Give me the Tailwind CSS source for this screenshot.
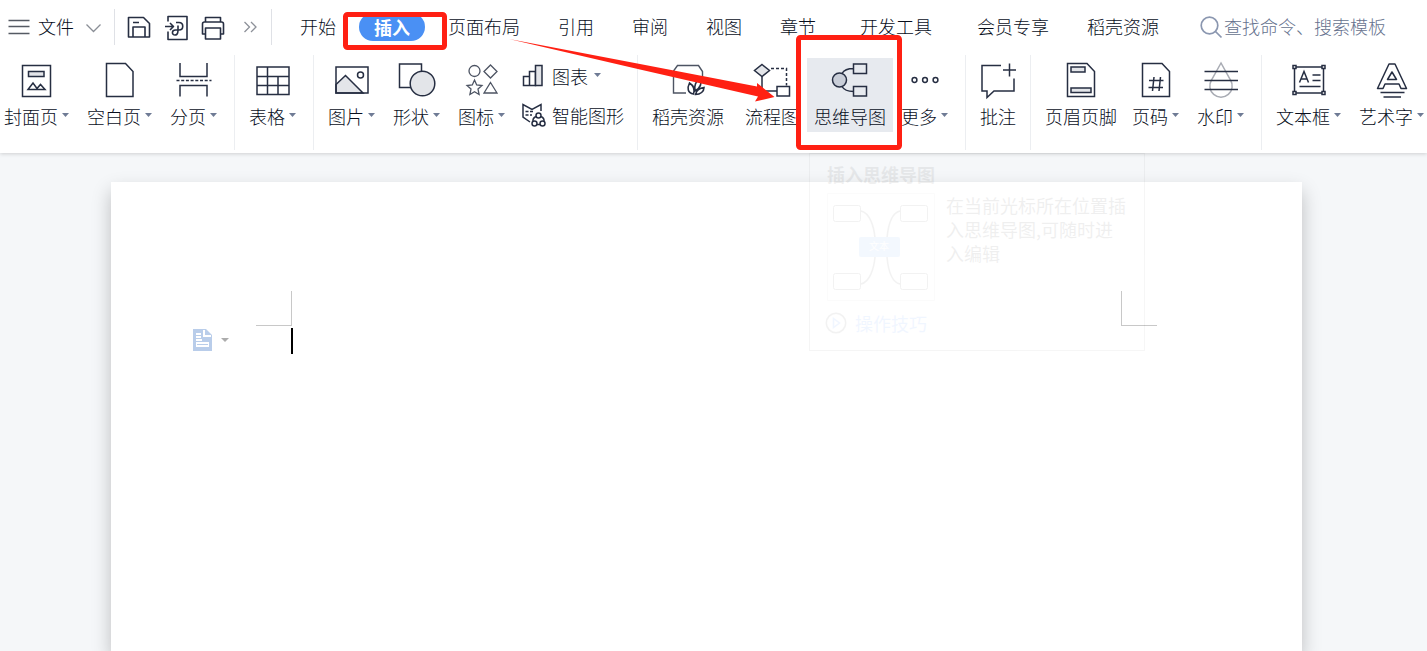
<!DOCTYPE html>
<html lang="zh-CN">
<head>
<meta charset="utf-8">
<meta name="viewport" content="width=device-width, initial-scale=1">
<title>WPS 文字 - 插入</title>
<script src="https://cdn.jsdelivr.net/npm/@tailwindcss/browser@4"></script>
</head>
<body class="relative flex min-h-screen flex-col overflow-x-hidden bg-[#f5f7f9] font-['Noto_Sans_CJK_SC',sans-serif] text-[18px] font-light whitespace-nowrap text-[#080e1c]">

<header class="relative z-10 bg-white shadow-[0_1px_4px_rgba(0,0,0,0.16)]">
  <!-- Menu bar -->
  <div class="flex h-[55px] items-center pb-0.5">
    <button class="flex items-center pl-2" type="button">
      <svg class="h-6 w-6" viewBox="0 0 24 24" fill="none" stroke="#555a63" stroke-width="1.5"><path d="M.5 5.500h21M.5 11.500h21M.5 18.500h21"/></svg>
      <span class="ml-1.5">文件</span>
      <svg class="ml-3 h-4 w-4" viewBox="0 0 16 16" fill="none" stroke="#8a8e96" stroke-width="1.300"><path d="M.5 5.500 7.500 12.500 14.500 5.500"/></svg>
    </button>
    <span class="ml-3 h-9 w-px bg-[#dfe1e6]"></span>
    <div class="flex items-center gap-[7px] pl-2">
      <button type="button" aria-label="保存" class="p-0.5"><svg class="h-7 w-7" viewBox="0 0 28 28" fill="none" stroke="#262e42" stroke-width="1.600" stroke-linejoin="round"><path d="M3.500 4.500h15l6 6V24h-21zM8 24V14h12v10M8 9.500h6"/></svg></button>
      <button type="button" aria-label="输出为PDF" class="-ml-0.5 p-0.5"><svg class="h-7 w-7" viewBox="0 0 28 28" fill="none" stroke="#262e42" stroke-width="1.600" stroke-linejoin="round"><path d="M6 8.500V3.500h19v23H6v-8M3 13.500h8M8 10l3.500 3.500L8 17M14 9.500h3c5 0 5 7.500 0 7.500h-3.500c-4 0-4 5-.5 5 3.500 0 3-5 3-7.500v-2"/></svg></button>
      <button type="button" aria-label="打印"><svg class="h-7 w-7" viewBox="0 0 28 28" fill="none" stroke="#262e42" stroke-width="1.600" stroke-linejoin="round"><path d="M6.500 9V4.500h15V9M6.500 21H3.500V11q0-2 2-2h17q2 0 2 2v10h-3M6.500 15h15v11h-15z"/></svg></button>
      <button type="button" aria-label="更多快捷命令" class="pl-1.5"><svg class="h-6 w-6" viewBox="0 0 24 24" fill="none" stroke="#8d9199" stroke-width="1.300"><path d="M4.500 7l5 5-5 5M11 7l5 5-5 5"/></svg></button>
    </div>
    <span class="ml-[7px] h-9 w-px bg-[#dfe1e6]"></span>
    <nav class="flex items-center pl-[9px]">
      <button type="button" class="px-[19px]">开始</button>
      <button type="button" class="mx-1 rounded-full bg-[#4a90f4] px-[15px] leading-7 font-bold text-white">插入</button>
      <button type="button" class="px-[19px]">页面布局</button>
      <button type="button" class="px-[19px]">引用</button>
      <button type="button" class="px-[19px]">审阅</button>
      <button type="button" class="px-[19px]">视图</button>
      <button type="button" class="px-[19px]">章节</button>
      <button type="button" class="ml-1.5 px-[19px]">开发工具</button>
      <button type="button" class="ml-[7px] px-[19px]">会员专享</button>
      <button type="button" class="px-[19px]">稻壳资源</button>
    </nav>
    <label class="ml-[22px] flex items-center text-[#66728e]">
      <svg class="h-6 w-6" viewBox="0 0 24 24" fill="none" stroke="#8b97b0" stroke-width="1.700" aria-hidden="true"><circle cx="9.500" cy="10.500" r="8.300"/><path d="M15.500 16.500l6 6"/></svg>
      <input type="text" aria-label="查找命令" placeholder="查找命令、搜索模板" class="w-44 bg-transparent outline-none placeholder:text-[#66728e]">
    </label>
  </div>

  <!-- Ribbon -->
  <div class="flex h-[98px] items-start gap-px leading-[26px]">
    <button type="button" class="mt-[3px] flex flex-col items-start gap-[3px] pt-0.5 pr-2.5 pb-[3px] pl-1">
      <svg class="h-10 w-10 self-center" viewBox="0 0 40 40" fill="none" stroke="#262e42" stroke-width="1.500"><path d="M5.500 5.500h28v31h-28z"/><path fill="#e3e5e9" d="M11.500 11.500H27v5H11.500z"/><path d="M11 29.500l5-6.500 4 5.500 3.500-4 4.500 5z"/></svg>
      <span class="flex items-center gap-1">封面页<svg class="mb-0.5 h-1 w-[7px]" viewBox="0 0 7 4" fill="#6f7b95"><path d="M0 0h7L3.500 4z"/></svg></span>
    </button>
    <button type="button" class="mt-[3px] flex flex-col items-start gap-[3px] pt-0.5 pr-2.5 pb-[3px] pl-[7px]">
      <svg class="h-10 w-10 self-center" viewBox="0 0 40 40" fill="none" stroke="#262e42" stroke-width="1.500"><path d="M6.500 3.500h19l7.500 8V36.500H6.500z"/></svg>
      <span class="flex items-center gap-1">空白页<svg class="mb-0.5 h-1 w-[7px]" viewBox="0 0 7 4" fill="#6f7b95"><path d="M0 0h7L3.500 4z"/></svg></span>
    </button>
    <button type="button" class="mt-[3px] flex flex-col items-start gap-[3px] pt-0.5 pr-2.5 pb-[3px] pl-[7px]">
      <svg class="h-10 w-10 self-center" viewBox="0 0 40 40" fill="none" stroke="#262e42" stroke-width="1.500"><path d="M6 3v13.500h27V3M6 36.500v-11h27v11"/><path stroke-dasharray="3 1.700" d="M2.500 20.500h35"/></svg>
      <span class="flex items-center gap-1">分页<svg class="mb-0.5 h-1 w-[7px]" viewBox="0 0 7 4" fill="#6f7b95"><path d="M0 0h7L3.500 4z"/></svg></span>
    </button>
    <span class="mx-1.5 h-[95px] w-px bg-[#eceef1]"></span>
    <button type="button" class="mt-[3px] flex flex-col items-start gap-[3px] pt-0.5 pr-2.5 pb-[3px] pl-[7px]">
      <svg class="h-10 w-10 self-center" viewBox="0 0 40 40" fill="none" stroke="#262e42" stroke-width="1.500"><path d="M4 7h32v27.500H4zM4 16.500h32M4 25.500h32M14.500 7v27.500M25 16.500v18"/></svg>
      <span class="flex items-center gap-1">表格<svg class="mb-0.5 h-1 w-[7px]" viewBox="0 0 7 4" fill="#6f7b95"><path d="M0 0h7L3.500 4z"/></svg></span>
    </button>
    <span class="mx-1.5 h-[95px] w-px bg-[#eceef1]"></span>
    <button type="button" class="mt-[3px] flex flex-col items-start gap-[3px] pt-0.5 pr-2.5 pb-[3px] pl-[7px]">
      <svg class="h-10 w-10 self-center" viewBox="0 0 40 40" fill="none" stroke="#262e42" stroke-width="1.500"><path fill="#e3e5e9" d="M4 24.500l9.500-9L31 33H4z"/><path d="M4 7h32v26H4z"/><circle cx="28.500" cy="15" r="3"/></svg>
      <span class="flex items-center gap-1">图片<svg class="mb-0.5 h-1 w-[7px]" viewBox="0 0 7 4" fill="#6f7b95"><path d="M0 0h7L3.500 4z"/></svg></span>
    </button>
    <button type="button" class="mt-[3px] flex flex-col items-start gap-[3px] pt-0.5 pr-2.5 pb-[3px] pl-[7px]">
      <svg class="h-10 w-10 self-center" viewBox="0 0 40 40" fill="none" stroke="#262e42" stroke-width="1.500"><path d="M2.500 4h22v23.500h-22z"/><circle cx="25.500" cy="23.500" r="12.300" fill="#e3e5e9"/></svg>
      <span class="flex items-center gap-1">形状<svg class="mb-0.5 h-1 w-[7px]" viewBox="0 0 7 4" fill="#6f7b95"><path d="M0 0h7L3.500 4z"/></svg></span>
    </button>
    <button type="button" class="mt-[3px] flex flex-col items-start gap-[3px] pt-0.5 pr-2.5 pb-[3px] pl-[7px]">
      <svg class="h-10 w-10 self-center" viewBox="0 0 40 40" fill="none" stroke="#4d5463" stroke-width="1.300"><circle cx="12.500" cy="11" r="5.500"/><path d="M28.500 5l6.500 6.500-6.500 6.500-6.500-6.500zM28.500 22.500L35 33H22zM12.500 20l2.200 4.900 5.300.6-4 3.600 1.100 5.400-4.600-2.700-4.600 2.700L9 29.100l-4-3.600 5.300-.6z"/></svg>
      <span class="flex items-center gap-1">图标<svg class="mb-0.5 h-1 w-[7px]" viewBox="0 0 7 4" fill="#6f7b95"><path d="M0 0h7L3.500 4z"/></svg></span>
    </button>
    <div class="mt-2 flex flex-col items-start gap-[13px]">
      <button type="button" class="flex items-center gap-1.5 px-1.5">
        <svg class="h-6 w-6" viewBox="0 0 24 24" fill="none" stroke="#262e42" stroke-width="1.500"><path d="M1.500 12.500h6v9h-6zM7.500 7.500h6v14h-6z"/><path fill="#e3e5e9" d="M13.500 1.500h6.500v20h-6.500z"/></svg>
        <span class="flex items-center gap-1.5">图表<svg class="mb-0.5 h-1 w-[7px]" viewBox="0 0 7 4" fill="#6f7b95"><path d="M0 0h7L3.500 4z"/></svg></span>
      </button>
      <button type="button" class="flex items-center gap-1.5 px-1.5">
        <svg class="h-6 w-6" viewBox="0 0 24 24" fill="none" stroke="#262e42" stroke-width="1.500"><path d="M19 8V1.500L10 6.500 1 1.500V14l7 5M3.500 8.500h3M8 8.500h3M3.500 12h3M8 12h2"/><circle cx="16.500" cy="12.500" r="2.500"/><circle cx="12.500" cy="20.500" r="2.500"/><circle cx="20.500" cy="20.500" r="2.500"/><path d="M14 13.500q-3.500 1.500-3 5M19 13.500q3.500 1.500 3 5M15 21.500h3"/></svg>
        <span>智能图形</span>
      </button>
    </div>
    <span class="mx-1.5 h-[95px] w-px bg-[#eceef1]"></span>
    <button type="button" class="mt-[3px] flex flex-col items-start gap-[3px] px-[7px] pt-0.5 pb-[3px]">
      <svg class="h-10 w-10 self-center" viewBox="0 0 40 40" fill="none" stroke="#4d5463" stroke-width="1.400"><path d="M18 33H5.500V11l4-5.500h21l4 6v8"/><g stroke="#262e42" stroke-width="1.600"><path d="M25.500 34c-6-1-6.500-6-4-11 4 2.500 5.500 6 4 11zM27 31c-1-6 1-10 5-12 2 5 .5 9-5 12zM27.500 34.500c1-4 3.500-6.500 8.500-7 0 4-3.500 7-8.500 7z"/></g></svg>
      <span>稻壳资源</span>
    </button>
    <button type="button" class="mt-[3px] ml-1.5 flex flex-col items-start gap-[3px] px-[7px] pt-0.5 pb-[3px]">
      <svg class="h-10 w-10 self-center" viewBox="0 0 40 40" fill="none" stroke="#262e42" stroke-width="1.500"><path fill="#e3e5e9" d="M10 4.500l7.500 6-7.500 6-7.500-6z"/><path d="M10 16.500V31h15M25 26.500h12.500V36H25z"/><path stroke-dasharray="3 2" d="M19 8.500h15.500v17"/></svg>
      <span>流程图</span>
    </button>
    <button type="button" class="mt-[3px] flex flex-col items-start gap-[3px] bg-[#e7eaef] px-[7px] pt-0.5 pb-[3px]">
      <svg class="h-10 w-10 self-center" viewBox="0 0 40 40" fill="none" stroke="#262e42" stroke-width="1.500"><circle cx="9.500" cy="20" r="7" fill="#c9ced8"/><path d="M23.500 4h13v9.500h-13zM23.500 26.500h13V36h-13zM12 13.500c2-3.500 6-5 11.500-5M12 26.500c2 3.500 6 5 11.500 5"/></svg>
      <span>思维导图</span>
    </button>
    <button type="button" class="mt-[3px] flex flex-col items-start gap-[3px] pt-0.5 pr-2.5 pb-[3px] pl-[7px]">
      <svg class="h-10 w-10 self-center" viewBox="0 0 40 40" fill="none" stroke="#262e42" stroke-width="1.500"><circle cx="9.500" cy="20" r="2.400"/><circle cx="20" cy="20" r="2.400"/><circle cx="30.500" cy="20" r="2.400"/></svg>
      <span class="flex items-center gap-1">更多<svg class="mb-0.5 h-1 w-[7px]" viewBox="0 0 7 4" fill="#6f7b95"><path d="M0 0h7L3.500 4z"/></svg></span>
    </button>
    <span class="mx-1.5 h-[95px] w-px bg-[#eceef1]"></span>
    <button type="button" class="mt-[3px] flex flex-col items-start gap-[3px] px-[7px] pt-0.5 pb-[3px]">
      <svg class="-mx-0.5 h-10 w-10 self-center" viewBox="0 0 40 40" fill="none" stroke="#262e42" stroke-width="1.500"><path d="M23 5.500H4V31h5v6.500L16 31h20V18.500M31.500 3.500v13M25 10h13"/></svg>
      <span>批注</span>
    </button>
    <span class="mx-1.5 h-[95px] w-px bg-[#eceef1]"></span>
    <button type="button" class="mt-[3px] flex flex-col items-start gap-[3px] px-[7px] pt-0.5 pb-[3px]">
      <svg class="h-10 w-10 self-center" viewBox="0 0 40 40" fill="none" stroke="#262e42" stroke-width="1.500"><path d="M6.500 3.500H26l7.500 8V36.500h-27z"/><path fill="#e3e5e9" d="M10 7h14v5H10zM10 28h20v4.500H10z"/></svg>
      <span>页眉页脚</span>
    </button>
    <button type="button" class="mt-[3px] flex flex-col items-start gap-[3px] pt-0.5 pr-2.5 pb-[3px] pl-[7px]">
      <svg class="h-10 w-10 self-center" viewBox="0 0 40 40" fill="none" stroke="#262e42" stroke-width="1.500"><path d="M6.500 3.500h19.500l7.500 8V36.500h-27zM13 20.500h14.500M12.500 27.500H27M18 17l-1.500 14M24.500 17L23 31"/></svg>
      <span class="flex items-center gap-1">页码<svg class="mb-0.5 h-1 w-[7px]" viewBox="0 0 7 4" fill="#6f7b95"><path d="M0 0h7L3.500 4z"/></svg></span>
    </button>
    <button type="button" class="mt-[3px] flex flex-col items-start gap-[3px] pt-0.5 pr-2.5 pb-[3px] pl-[7px]">
      <svg class="h-10 w-10 self-center" viewBox="0 0 40 40" fill="none" stroke="#262e42" stroke-width="1.500"><path stroke="#a9acb4" d="M20 3l-9.500 17a11.200 11.200 0 1 0 19 0z"/><path d="M3.500 11.500H37M3.500 20.500H37M3.500 29.500H37"/></svg>
      <span class="flex items-center gap-1">水印<svg class="mb-0.5 h-1 w-[7px]" viewBox="0 0 7 4" fill="#6f7b95"><path d="M0 0h7L3.500 4z"/></svg></span>
    </button>
    <span class="mx-1.5 h-[95px] w-px bg-[#eceef1]"></span>
    <button type="button" class="mt-[3px] flex flex-col items-start gap-[3px] pt-0.5 pr-2.5 pb-[3px] pl-[7px]">
      <svg class="h-10 w-10 self-center" viewBox="0 0 40 40" fill="none" stroke="#262e42" stroke-width="1.500"><path d="M5.500 7h29v26h-29zM10.500 22.500L15 11.500l4.500 11M12 19h6M23.500 15h8M23.500 20.500h8M10.500 26.500h21"/><path fill="#fff" d="M4 5.500h3v3H4zM33 5.500h3v3h-3zM4 31.500h3v3H4zM33 31.500h3v3h-3z"/></svg>
      <span class="flex items-center gap-1">文本框<svg class="mb-0.5 h-1 w-[7px]" viewBox="0 0 7 4" fill="#6f7b95"><path d="M0 0h7L3.500 4z"/></svg></span>
    </button>
    <button type="button" class="mt-[3px] flex flex-col items-start gap-[3px] pt-0.5 pr-0.5 pb-[3px] pl-[7px]">
      <svg class="h-10 w-10 self-center" viewBox="0 0 40 40" fill="none" stroke="#262e42" stroke-width="1.500" stroke-linejoin="round"><path d="M17 4h6l11.500 24.500H29L27 24H13l-2 4.500H5.500zM20 12l-4.500 7.500h9zM8.500 32.500h24M11.500 37H29"/></svg>
      <span class="flex items-center gap-1">艺术字<svg class="mb-0.5 h-1 w-[7px]" viewBox="0 0 7 4" fill="#6f7b95"><path d="M0 0h7L3.500 4z"/></svg></span>
    </button>
  </div>
</header>

<!-- Document area -->
<main class="relative flex grow flex-col overflow-hidden pt-[29px] pr-[125px] pl-[111px]">
  <div class="grow bg-white pt-[109px] shadow-[0_9px_18px_rgba(0,0,0,0.23)]">
    <div class="flex justify-between px-[145px]">
      <span class="h-[35px] w-9 border-r border-b border-[#c8c8c8]"></span>
      <span class="h-[35px] w-9 border-b border-l border-[#c8c8c8]"></span>
    </div>
    <div class="flex items-center pt-0.5 pl-[82px]">
      <button type="button" aria-label="段落布局" class="flex items-center gap-2">
        <svg class="h-6 w-5" viewBox="0 0 20 24"><path fill="#b9cdea" d="M0 0h13l6 6v16H0z"/><path fill="#fff" d="M10 1h2v5h6v2h-8zM3 4h5v2H3zM3 7h5v2H3zM3 10h6v2H3zM3 13h13v5H3z"/><path stroke="#b9cdea" d="M4 15.500h11"/></svg>
        <svg class="mb-0.5 h-1 w-2" viewBox="0 0 8 4" fill="#acacac"><path d="M0 0h8L4 4z"/></svg>
      </button>
      <span class="ml-[62px] h-[26px] w-0.5 bg-black"></span>
    </div>
  </div>

  <!-- Fading tooltip of the mind-map command -->
  <div role="tooltip" class="absolute top-0 left-[809px] h-[198px] w-[336px] border border-black/60 px-[17px] pt-1.5 font-normal text-black opacity-[0.06]">
    <p class="leading-7 font-bold">插入思维导图</p>
    <div class="mt-[5px] flex gap-[11px]">
      <svg class="h-[108px] w-[108px] shrink-0" viewBox="0 0 108 108" fill="none" stroke="#333"><path stroke="#aaa" stroke-width=".6" d="M.5.5h107v107H.5z"/><rect x="6.500" y="12.500" width="27" height="16" rx="2"/><rect x="73.500" y="12.500" width="27" height="16" rx="2"/><rect x="6.500" y="80.500" width="27" height="16" rx="2"/><rect x="73.500" y="80.500" width="27" height="16" rx="2"/><path stroke-width="1.500" d="M34 18c9 2 13 16 14 27M73 18c-9 2-12 16-13 27M34 91c9-2 13-16 14-27M73 91c-9-2-12-16-13-27"/><rect x="32" y="44" width="41" height="20" rx="2" fill="#4a90f4" stroke="none"/><text x="52" y="57" text-anchor="middle" font-size="10" fill="#fff" stroke="none">文本</text></svg>
      <p class="w-[183px] leading-6 whitespace-normal">在当前光标所在位置插入思维导图,可随时进入编辑</p>
    </div>
    <a href="#" class="-ml-0.5 mt-[9px] flex items-center gap-2 leading-[26px] text-[#1a73ff]">
      <svg class="h-[22px] w-[22px]" viewBox="0 0 22 22" fill="none" stroke="currentColor" stroke-width="1.500"><circle cx="11" cy="11" r="9.700" stroke="#333"/><path d="M8.500 6.500v9l6-4.500z"/></svg>操作技巧</a>
  </div>
</main>

<!-- Tutorial markers pointing from the tab to the command -->
<svg class="pointer-events-none absolute inset-0 z-20 h-full w-full" fill="none" stroke="#ff2013" stroke-width="5" stroke-linejoin="round" aria-hidden="true">
  <rect x="345.500" y="14.500" width="99" height="33" rx="2"/>
  <rect x="798.500" y="37.500" width="101" height="110" rx="2"/>
  <path fill="#ff2013" stroke="none" d="M509 39L640 64l117 22.500V83L774.500 97 755 101.500l3-5L640 69.500z"/>
</svg>
</body>
</html>
